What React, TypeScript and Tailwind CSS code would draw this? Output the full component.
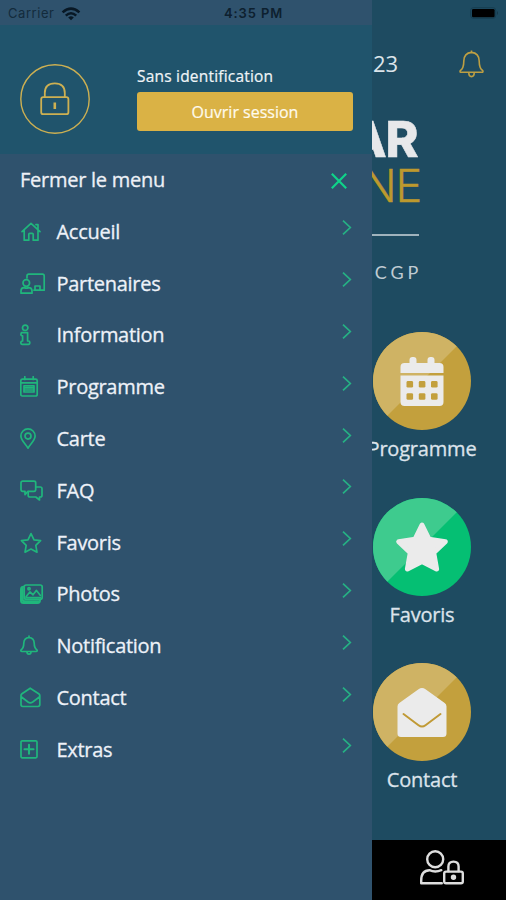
import React from 'react';

type IconName =
  | 'home' | 'partners' | 'info' | 'calendar' | 'pin' | 'chat'
  | 'star' | 'photos' | 'bell' | 'mail' | 'plus';

const STAR = 'M11 1.6 L14 7.8 L20.6 8.7 L15.8 13.4 L17 20.2 L11 17 L5 20.2 L6.2 13.4 L1.4 8.7 L8 7.8 Z';

const shapes: Record<IconName, React.ReactNode> = {
  home: (
    <path d="M2 10.6 L11 2.4 L20 10.6 M15.9 3.6 H18 V8.6 M4.2 9.2 V19.2 H8.8 V13.3 Q8.8 12.3 9.8 12.3 H12.2 Q13.2 12.3 13.2 13.3 V19.2 H18 V9.2" />
  ),
  partners: (
    <>
      <path d="M7 5 V3 Q7 1.2 8.8 1.2 H22.5 Q24.2 1.2 24.2 3 V17.2 H14 M15 17 V13 H20 V17" />
      <circle cx="6.3" cy="10" r="3.3" />
      <path d="M1 20.2 V18 Q1 14.6 4 14.6 Q6.5 15.5 8.6 14.6 Q12 14.6 12 18 V20.2 Z" />
    </>
  ),
  info: (
    <>
      <circle cx="5.2" cy="3.8" r="2.7" />
      <path d="M1.6 8.6 H7.6 V17 H8.4 Q9.8 17 9.8 18.6 Q9.8 20.4 8.4 20.4 H2.2 Q.8 20.4 .8 18.6 Q.8 17 2.6 17 V11.8 Q.9 11.8 .9 10.2 Q.9 8.6 2.2 8.6" />
    </>
  ),
  calendar: (
    <>
      <path d="M2.4 3.2 H15.6 Q17.2 3.2 17.2 4.8 V18.2 Q17.2 20 15.6 20 H2.4 Q.8 20 .8 18.2 V4.8 Q.8 3.2 2.4 3.2 Z M4.8 .7 V3.5 M13.2 .7 V3.5 M1 6.9 H17" />
      <path d="M4 9.8 H14 V16 H4 Z M4 11.9 H14 M4 14 H14" />
    </>
  ),
  pin: (
    <>
      <path d="M8 20.2 C6.8 17 .9 12.8 .9 8 A7.1 7.1 0 0 1 15.1 8 C15.1 12.8 9.2 17 8 20.2 Z" />
      <circle cx="8" cy="8.1" r="3" />
    </>
  ),
  chat: (
    <>
      <path d="M8 11.3 L5 14.6 V11.3 H2.7 Q1 11.3 1 9.6 V2.8 Q1 1.2 2.7 1.2 H14 Q15.7 1.2 15.7 2.8 V9.6 Q15.7 11.3 14 11.3 Z" />
      <path d="M15.7 7 H20.3 Q22 7 22 8.7 V15.4 Q22 17 20.3 17 H19.5 V20 L15.8 17 H10 Q8.2 17 8.2 15.4 V11.5" />
    </>
  ),
  star: <path d={STAR} />,
  photos: (
    <>
      <path d="M6.2 2 H20.2 Q22.2 2 22.2 4 V14.2 Q22.2 16.2 20.2 16.2 H6.2 Q4.2 16.2 4.2 14.2 V4 Q4.2 2 6.2 2 Z" />
      <path d="M4 3.8 Q1 3.8 1 6.2 V17.5 Q1 20 3.5 20 H17.5 Q20 20 20 17 M2.7 5.8 V16.4 Q2.7 18.2 4.8 18.2 H19" strokeWidth="2" />
      <path d="M6 13.8 L10 8.8 L13 11.8 L16.5 7.4 L20.4 12.4 M6 14.5 H20.4" />
      <circle cx="9" cy="5.8" r="1.1" />
    </>
  ),
  bell: (
    <>
      <path d="M9 1 V2.5 M9 2.5 Q4 3 3.8 8 Q3.8 13 1 15 Q.4 16.4 2 16.5 H16 Q17.6 16.4 17 15 Q14.2 13 14.2 8 Q14 3 9 2.5" />
      <path d="M7 17 Q7 19.2 9 19.2 Q11 19.2 11 17" />
    </>
  ),
  mail: (
    <path d="M1 8.6 Q1 7.5 2 6.8 L10.2 1.2 L18.7 6.8 Q19.8 7.5 19.8 8.6 V17.6 Q19.8 19.5 18 19.5 H2.8 Q1 19.5 1 17.6 Z M1.5 10 L8 15 Q10.3 16.6 12.7 15 L19.4 10" />
  ),
  plus: (
    <>
      <path d="M2.2 1.8 H15.8 Q17 1.8 17 3 V17.6 Q17 18.8 15.8 18.8 H2.2 Q1 18.8 1 17.6 V3 Q1 1.8 2.2 1.8 Z" />
      <path d="M9 5.8 V14.8 M4.5 10.3 H13.5" strokeWidth="2.1" />
    </>
  ),
};

const items: { icon: IconName; label: string }[] = [
  { icon: 'home', label: 'Accueil' },
  { icon: 'partners', label: 'Partenaires' },
  { icon: 'info', label: 'Information' },
  { icon: 'calendar', label: 'Programme' },
  { icon: 'pin', label: 'Carte' },
  { icon: 'chat', label: 'FAQ' },
  { icon: 'star', label: 'Favoris' },
  { icon: 'photos', label: 'Photos' },
  { icon: 'bell', label: 'Notification' },
  { icon: 'mail', label: 'Contact' },
  { icon: 'plus', label: 'Extras' },
];

function MenuRow({ icon, label }: { icon: IconName; label: string }) {
  return (
    <li className="flex h-[51.8px] items-center pl-[19.5px] pr-[20px]">
      <svg className="h-[22px] w-[26px] shrink-0 fill-none stroke-[#20b67c]" viewBox="0 0 26 22" strokeWidth="1.7" strokeLinejoin="round" strokeLinecap="round">
        {shapes[icon]}
      </svg>
      <span className="ml-[11px] grow text-[20px] leading-none tracking-[-0.28px] text-[#edf1f8] [-webkit-text-stroke:0.3px_#edf1f8]">{label}</span>
      <svg className="mb-[8px] h-[17px] w-[10px] fill-none stroke-[#26b184]" viewBox="0 0 10 17" strokeWidth="1.7">
        <path d="M1 1.6 L8.3 8.5 L1 15.4" />
      </svg>
    </li>
  );
}

function Tile({ label, green, children }: { label: string; green?: boolean; children: React.ReactNode }) {
  return (
    <div className="flex h-[165.5px] w-[140px] flex-col items-center">
      <svg className="h-[98px] w-[98px] shrink-0 rounded-full" viewBox="0 0 98 98">
        <rect width="98" height="98" fill={green ? '#05bf73' : '#c3a03d'} />
        <path d="M98 0 H0 V98 Z" fill={green ? '#3ecb8e' : '#cfb364'} />
        {children}
      </svg>
      <span className="mt-[9px] text-[20px] leading-[20px] tracking-[-0.2px] text-[#dce3eb] [-webkit-text-stroke:0.3px_#dce3eb]">{label}</span>
    </div>
  );
}

export default function App() {
  return (
    <div className="flex h-[900px] w-[506px] overflow-hidden bg-[#1e4b61] font-['Open_Sans','Noto_Sans',sans-serif]">
      <aside className="flex w-[372px] shrink-0 flex-col bg-[#2f526d]">
        <div className="flex h-[25px] items-center pl-[8px] pt-[2px] font-['Inter','Liberation_Sans',sans-serif] text-[13px] text-[#132b3c]">
          <span className="w-[48px] tracking-[0.55px]">Carrier</span>
          <svg className="ml-[5px] h-[14px] w-[20px] fill-none stroke-[#081825]" viewBox="0 0 20 14" strokeWidth="2.6">
            <path d="M1.6 5.4 Q10 -2.2 18.4 5.4 M4.8 8.6 Q10 3.9 15.2 8.6" />
            <path d="M7.2 10.4 Q10 8.2 12.8 10.4 L10 13.2 Z" fill="#081825" stroke="none" />
          </svg>
          <span className="ml-[143px] whitespace-nowrap font-semibold tracking-[0.9px] text-[#0d202f]">4:35 PM</span>
        </div>
        <header className="flex h-[129px] items-start bg-[#20546c] pl-[20px] pt-[39px]">
          <svg className="h-[70px] w-[70px] shrink-0 fill-none stroke-[#cdb052]" viewBox="0 0 70 70" strokeWidth="1.4">
            <circle cx="35" cy="35" r="34.2" />
            <path d="M24.8 33 V29 Q24.8 19.4 34.8 19.4 Q44.8 19.4 44.8 29 V33" strokeWidth="1.8" />
            <rect x="21.2" y="33.2" width="27.2" height="17" rx="2" strokeWidth="1.8" />
            <path d="M34.8 38.5 V45" strokeWidth="2.6" />
          </svg>
          <div className="ml-[47px] flex w-[216px] flex-col">
            <span className="pt-[3px] text-[15.5px] leading-[18px] tracking-[0.2px] text-[#f0f4f7] [-webkit-text-stroke:0.2px_#f0f4f7]">Sans identification</span>
            <button className="mt-[7px] h-[39px] rounded-[3px] bg-[#dab245] text-[16px] text-[#fffbed] [-webkit-text-stroke:0.2px_#fffbed]">Ouvrir session</button>
          </div>
        </header>
        <div className="flex h-[52px] items-center justify-between pl-[20px] pr-[25px]">
          <span className="text-[20px] leading-none tracking-[-0.26px] text-[#edf0f6] [-webkit-text-stroke:0.3px_#edf0f6]">Fermer le menu</span>
          <svg className="mt-[2px] h-[16px] w-[16px] stroke-[#0fd389]" viewBox="0 0 16 16" strokeWidth="2.2">
            <path d="M.8 .8 L15.2 15.2 M15.2 .8 L.8 15.2" />
          </svg>
        </div>
        <ul>
          {items.map((item) => <MenuRow key={item.label} {...item} />)}
        </ul>
      </aside>

      <main className="flex w-[134px] flex-col overflow-hidden">
        <div className="flex h-[26px] items-center justify-end pr-[7px]">
          <svg className="h-[12px] w-[29px]" viewBox="0 0 29 12">
            <rect x=".7" y=".7" width="25" height="10.6" rx="2.6" fill="none" stroke="#173e51" />
            <rect x="2" y="2" width="22.6" height="8.2" rx="1.3" />
            <path d="M27 4 Q29 6 27 8 Z" fill="#163748" />
          </svg>
        </div>
        <div className="flex h-[76px] items-center justify-between pl-[1px] pr-[22px]">
          <span className="mb-[2px] text-[22px] leading-none text-[#dce4ea]">23</span>
          <svg className="h-[28px] w-[25px] fill-none stroke-[#bd9f43]" viewBox="0 0 25 28" strokeWidth="1.6" strokeLinejoin="round">
            <path d="M12.5 .6 V2.5 M12.5 2.4 Q5 3 4.8 11 Q4.8 18.4 1.2 20.7 Q.6 22.3 2 22.3 H23 Q24.4 22.3 23.8 20.7 Q20.2 18.4 20.2 11 Q20 3 12.5 2.4" />
            <path d="M9.8 22.8 Q9.8 26.6 12.5 26.6 Q15.2 26.6 15.2 22.8" />
          </svg>
        </div>
        <div className="flex h-[229px] w-[47px] shrink-0 flex-col items-end whitespace-nowrap pt-[13px] font-['Inter','Liberation_Sans',sans-serif]">
          <span className="mr-[1.5px] text-[50px] font-extrabold leading-[48px] tracking-[-1.2px] text-[#e7e8ea] [-webkit-text-stroke:0.5px_#e7e8ea]">AR</span>
          <span className="mr-[-2px] text-[45px] font-light leading-[46px] tracking-[-1.2px] text-[#bd992e] [-webkit-text-stroke:0.3px_#bd992e]">NE</span>
          <span className="mt-[25px] h-[2px] w-[47px] shrink-0 bg-[#a0b3bd]" />
          <span className="mr-[-3px] mt-[26px] font-['Lato','Open_Sans',sans-serif] text-[18px] leading-[20px] tracking-[3.8px] text-[#c0ccd3]">CGP</span>
        </div>
        <div className="-ml-[20px] flex h-[509px] shrink-0 flex-col">
          <div className="h-[1px]" />
          <Tile label="Programme">
            <g fill="#ebebeb">
              <rect x="36.5" y="25" width="7" height="11" rx="3" />
              <rect x="54.5" y="25" width="7" height="11" rx="3" />
              <path d="M27.5 41 V35 Q27.5 31 31.5 31 H66.5 Q70.5 31 70.5 35 V41 Z M27.5 43.5 H70.5 V70 Q70.5 74 66.5 74 H31.5 Q27.5 74 27.5 70 Z" />
            </g>
            <g fill="#c3a03d">
              {[33.5, 45.8, 58].map((x) => [49, 61.2].map((y) => (
                <rect key={`${x}-${y}`} x={x} y={y} width="6.6" height="6.6" rx="1.4" />
              )))}
            </g>
          </Tile>
          <Tile label="Favoris" green>
            <path d="M49 27 L56 41.3 L72.3 43.7 L60.7 54.8 L63.6 71 L49 63.5 L34.4 71 L37.3 54.8 L25.7 43.7 L42 41.3 Z" fill="#ebebeb" stroke="#ebebeb" strokeWidth="5" strokeLinejoin="round" />
          </Tile>
          <Tile label="Contact">
            <path d="M24.5 43.5 Q24.5 41.3 26.3 40 L45.5 26.3 Q49 23.8 52.5 26.3 L71.7 40 Q73.5 41.3 73.5 43.5 V70.5 Q73.5 74 70 74 H28 Q24.5 74 24.5 70.5 Z" fill="#ebebeb" />
            <path d="M30.5 51 L45.5 62.2 Q49 64.8 52.5 62.2 L67.5 51" fill="none" stroke="#c09a36" strokeWidth="2" strokeLinecap="round" />
          </Tile>
        </div>
        <footer className="flex h-[60px] shrink-0 items-start bg-black pl-[47px] pt-[9px]">
          <svg className="h-[37px] w-[46px] fill-none stroke-[#dedede]" viewBox="0 0 46 37" strokeWidth="2.4" strokeLinejoin="round" strokeLinecap="round">
            <circle cx="16.2" cy="10.2" r="8" />
            <path d="M22.8 34.2 H2.2 V31.5 Q2.2 21.4 10.5 21.2 Q16.2 23.8 22.3 21.2" />
            <rect x="25.2" y="22.6" width="18.6" height="11.6" rx="1.8" />
            <path d="M29.4 22 V17.5 Q29.4 12.6 34.5 12.6 Q39.6 12.6 39.6 17.5 V22" />
            <circle cx="34.5" cy="28.2" r="1.5" fill="#dedede" />
          </svg>
        </footer>
      </main>
    </div>
  );
}
